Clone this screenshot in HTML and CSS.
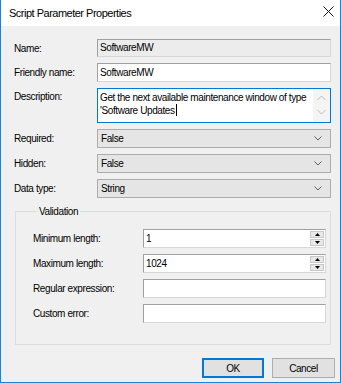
FILE: index.html
```html
<!DOCTYPE html>
<html lang="en">
<head>
  <meta charset="UTF-8" />
  <title>Script Parameter Properties</title>
  <link rel="stylesheet" href="styles.css">
</head>
<body>
  <div class="window">
    <div class="titlebar">
      <span class="title">Script Parameter Properties</span>
      <svg class="close" width="11" height="11" viewBox="0 0 11 11">
        <path d="M0.5 0.5 L10.5 10.5 M10.5 0.5 L0.5 10.5" stroke="#111" stroke-width="1" fill="none" />
      </svg>
    </div>
    <div class="content">
      <div class="fields">
        <label class="lbl">Name:</label>
        <div class="box readonly short">SoftwareMW</div>

        <label class="lbl">Friendly name:</label>
        <div class="box">SoftwareMW</div>

        <label class="lbl lbl-top">Description:</label>
        <div class="box memo">
          <div class="memo-text">Get the next available maintenance window of type<br>'Software Updates<span class="caret"></span></div>
          <div class="memo-scroll">
            <svg width="9" height="6" viewBox="0 0 9 6"><path d="M0.5 5 L4.5 1 L8.5 5" stroke="#bcbcbc" fill="none" /></svg>
            <svg width="9" height="6" viewBox="0 0 9 6"><path d="M0.5 1 L4.5 5 L8.5 1" stroke="#bcbcbc" fill="none" /></svg>
          </div>
        </div>

        <label class="lbl">Required:</label>
        <div class="combo"><span>False</span><svg width="8" height="5" viewBox="0 0 8 5"><path d="M0.5 0.5 L4 4 L7.5 0.5" stroke="#606060" fill="none" /></svg></div>

        <label class="lbl">Hidden:</label>
        <div class="combo"><span>False</span><svg width="8" height="5" viewBox="0 0 8 5"><path d="M0.5 0.5 L4 4 L7.5 0.5" stroke="#606060" fill="none" /></svg></div>

        <label class="lbl">Data type:</label>
        <div class="combo"><span>String</span><svg width="8" height="5" viewBox="0 0 8 5"><path d="M0.5 0.5 L4 4 L7.5 0.5" stroke="#606060" fill="none" /></svg></div>
      </div>

      <fieldset class="group">
        <legend>Validation</legend>
        <div class="group-fields">
          <label class="lbl">Minimum length:</label>
          <div class="box spin">
            <span class="spin-val">1</span>
            <div class="spin-btns">
              <div class="spin-btn"><svg width="5" height="3" viewBox="0 0 5 3"><path d="M2.5 0 L5 3 L0 3 Z" fill="#000" /></svg></div>
              <div class="spin-btn"><svg width="5" height="3" viewBox="0 0 5 3"><path d="M0 0 L5 0 L2.5 3 Z" fill="#000" /></svg></div>
            </div>
          </div>

          <label class="lbl">Maximum length:</label>
          <div class="box spin">
            <span class="spin-val">1024</span>
            <div class="spin-btns">
              <div class="spin-btn"><svg width="5" height="3" viewBox="0 0 5 3"><path d="M2.5 0 L5 3 L0 3 Z" fill="#000" /></svg></div>
              <div class="spin-btn"><svg width="5" height="3" viewBox="0 0 5 3"><path d="M0 0 L5 0 L2.5 3 Z" fill="#000" /></svg></div>
            </div>
          </div>

          <label class="lbl">Regular expression:</label>
          <div class="box"></div>

          <label class="lbl">Custom error:</label>
          <div class="box"></div>
        </div>
      </fieldset>

      <div class="buttons">
        <button class="btn btn-default">OK</button>
        <button class="btn">Cancel</button>
      </div>
    </div>
  </div>
</body>
</html>
```

FILE: styles.css
```css
* { box-sizing: border-box; }
html, body { margin: 0; padding: 0; background: #f0f0f0; }
body {
  font-family: 'Liberation Sans', Arial, sans-serif;
  font-size: 10px; letter-spacing: -0.4px; color: #000;
}
.window {
  width: 341px; height: 383px;
  border: 1px solid #1a82d8; border-top: none;
  background: #f0f0f0;
  display: flex; flex-direction: column;
}
.titlebar {
  height: 26px; background: #fff;
  display: flex; align-items: center; justify-content: space-between;
  padding: 0 6px 1px 8px;
}
.title { font-size: 11px; letter-spacing: -0.5px; color: #000; }
.close { margin-top: -2px; }
.content { flex: 1; display: flex; flex-direction: column; }

.fields {
  display: grid; grid-template-columns: 83px 234px;
  row-gap: 6px; padding: 13px 9px 0 13px;
}
.lbl { display: flex; align-items: center; white-space: nowrap; }
.lbl-top { align-items: flex-start; padding-top: 3px; }

.box {
  height: 19px; background: #fff;
  border: 1px solid #7a7a7a; border-color: #a0a0a0 #d7d7d7 #d7d7d7 #a0a0a0;
  padding: 0 2px; line-height: 17px; white-space: nowrap; overflow: hidden;
}
.box.short { height: 18px; line-height: 16px; }
.box.readonly { background: #ececec; }
.memo {
  height: 35px; display: flex; padding: 0 0 0 2px;
  border: 1px solid #0078d7; line-height: 13px;
}
.memo-text { flex: 1; min-width: 0; padding-top: 2px; overflow: hidden; }
.caret { display: inline-block; width: 1px; height: 12px; background: #000; vertical-align: -2px; margin-left: 1px; }
.memo-scroll {
  width: 17px; flex: none; background: #f4f4f4;
  display: flex; flex-direction: column; align-items: center; justify-content: space-between;
  padding: 6px 0 7px;
}
.memo-scroll svg { display: block; }

.combo {
  height: 19px; background: #e5e5e5; border: 1px solid #acacac;
  display: flex; align-items: center; justify-content: space-between;
  padding: 0 8px 0 3px;
}
.combo svg { display: block; }

.group {
  margin: 7px 9px 0 14px; padding: 0 4px 21px 17px;
  border: 1px solid #dcdcdc; min-width: 0;
}
.group legend { margin-left: 4px; padding: 0 2px; line-height: 13px; }
.group-fields {
  display: grid; grid-template-columns: 110px 183px;
  row-gap: 6px; padding-top: 11px;
}
.spin { display: flex; align-items: stretch; padding: 0 0 0 2px; }
.spin-val { flex: 1; }
.spin-btns { width: 15px; display: flex; flex-direction: column; gap: 1px; padding: 1px 1px 1px 0; }
.spin-btn {
  flex: 1; background: #e8e8e8; border: 1px solid #c8c8c8;
  display: flex; align-items: center; justify-content: center;
}
.spin-btn svg { display: block; }

.buttons {
  display: flex; justify-content: flex-end; gap: 8px;
  padding: 13px 5px 0 0;
}
.btn {
  width: 63px; height: 20px; margin: 0; padding: 0;
  background: #e1e1e1; border: 1px solid #adadad;
  font-family: inherit; font-size: 10px; letter-spacing: -0.4px; color: #000;
}
.btn-default { border: 1px solid #0078d7; box-shadow: inset 0 0 0 1px #0078d7; width: 62px; }
```
